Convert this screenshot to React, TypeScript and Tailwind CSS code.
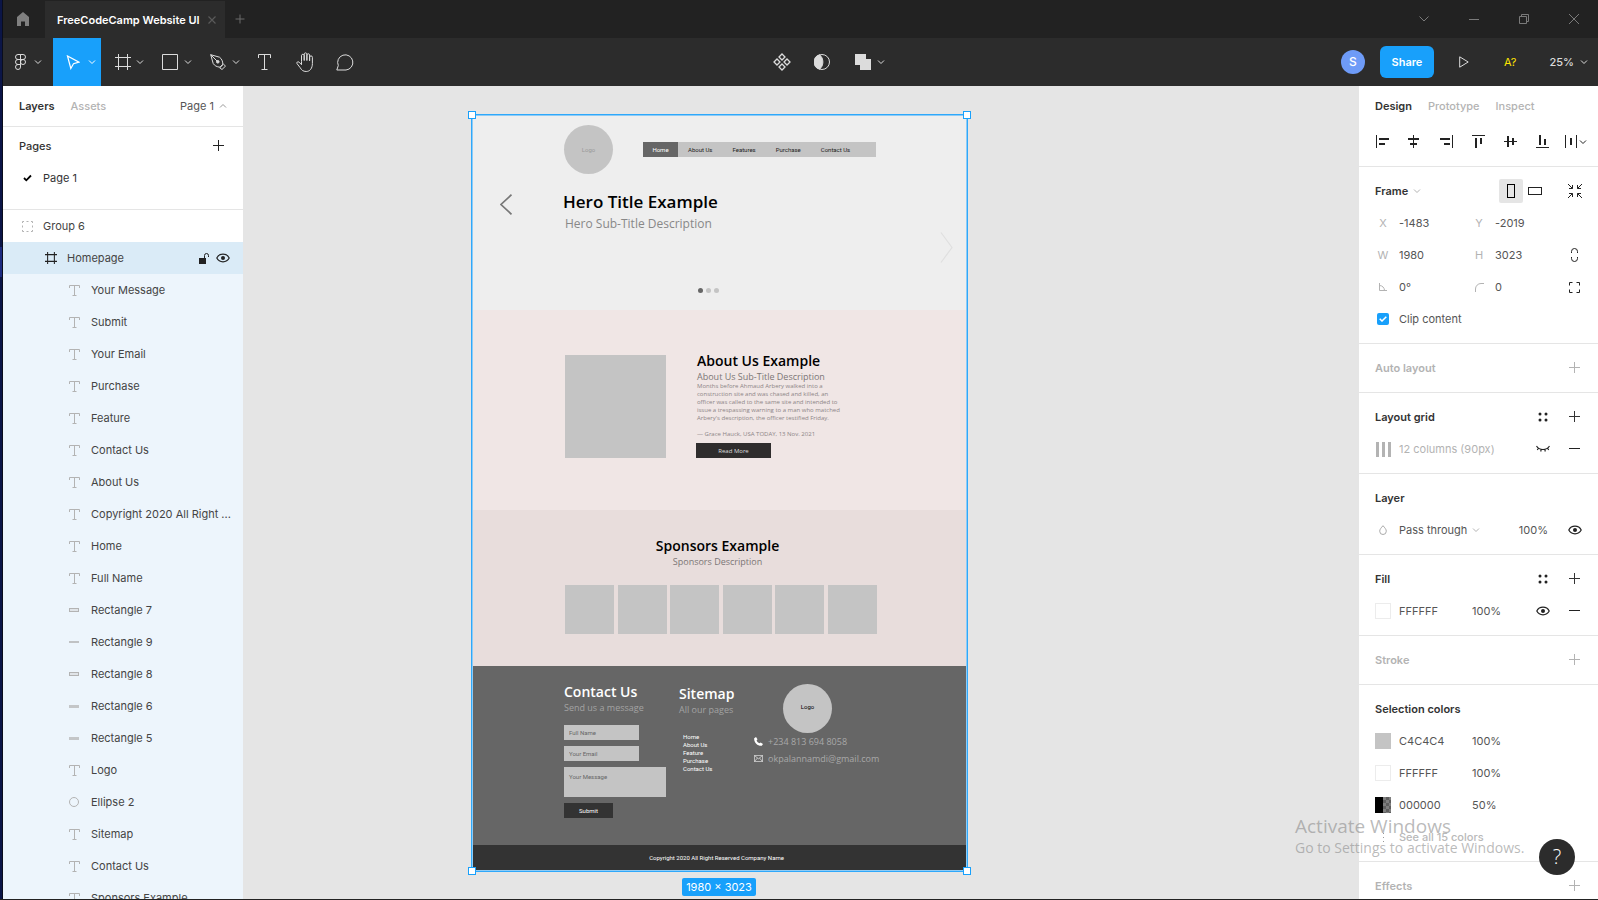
import type { ReactNode } from "react";

const Chevron = ({ className = "", up = false }: { className?: string; up?: boolean }) => (
  <svg width="8" height="8" viewBox="0 0 8 8" fill="none" stroke="currentColor" className={`shrink-0 ${className}`}>
    <path d={up ? "M1 5.5l3-3 3 3" : "M1 2.5l3 3 3-3"} />
  </svg>
);

const Plus = () => (
  <svg width="12" height="12" viewBox="0 0 12 12" stroke="currentColor">
    <path d="M5.5 0v11M0 5.5h11" />
  </svg>
);

const Minus = () => (
  <svg width="12" height="12" viewBox="0 0 12 12" stroke="currentColor">
    <path d="M0 5.5h11" />
  </svg>
);

const Eye = () => (
  <svg width="14" height="10" viewBox="0 0 14 10" fill="none" stroke="currentColor">
    <path d="M.8 5C2 2.600 4.200 1.200 7 1.200S12 2.600 13.200 5C12 7.400 9.800 8.800 7 8.800S2 7.400.8 5z" strokeWidth="1.200" />
    <circle cx="7" cy="5" r="2" fill="currentColor" stroke="none" />
  </svg>
);

const ClosedEye = () => (
  <svg width="14" height="8" viewBox="0 0 14 8" fill="none" stroke="currentColor">
    <path d="M.5 1C2 3.300 4.200 4.500 7 4.500S12 3.300 13.500 1M2.600 3L1.300 5M5.200 4.300l-.5 2.200M8.800 4.300l.5 2.200M11.400 3l1.300 2" strokeWidth="1.200" />
  </svg>
);

const FourDots = () => (
  <svg width="10" height="10" viewBox="0 0 10 10" fill="currentColor">
    <circle cx="2" cy="2" r="1.500" />
    <circle cx="8" cy="2" r="1.500" />
    <circle cx="2" cy="8" r="1.500" />
    <circle cx="8" cy="8" r="1.500" />
  </svg>
);

const FrameIcon = ({ size }: { size: number }) => (
  <svg width={size} height={size} viewBox="0 0 16 16" fill="none" stroke="currentColor" strokeWidth={size > 12 ? 1 : 1.4}>
    <path d="M3.500 0v16M12.500 0v16M0 3.500h16M0 12.500h16" />
  </svg>
);

const TextIcon = () => (
  <svg width="11" height="11" viewBox="0 0 11 11" fill="none" stroke="#b3b3b3">
    <path d="M.5 3V.5h10V3M5.500.5v10M3.500 10.500h4" />
  </svg>
);

type LayerKind = "text" | "box" | "line" | "bar" | "ellipse";

const LayerIcon = ({ kind }: { kind: LayerKind }) => {
  if (kind === "text") return <TextIcon />;
  if (kind === "ellipse") return <span className="size-[10px] rounded-full border border-[#b3b3b3]" />;
  if (kind === "box") return <span className="h-1 w-[10px] border border-[#b3b3b3] bg-[#e0e4e8]" />;
  if (kind === "line") return <span className="h-[2px] w-[10px] bg-[#c0c2c4]" />;
  return <span className="h-[3px] w-[10px] bg-[#c4c6c8]" />;
};

const layers: { name: string; kind: LayerKind }[] = [
  { name: "Your Message", kind: "text" },
  { name: "Submit", kind: "text" },
  { name: "Your Email", kind: "text" },
  { name: "Purchase", kind: "text" },
  { name: "Feature", kind: "text" },
  { name: "Contact Us", kind: "text" },
  { name: "About Us", kind: "text" },
  { name: "Copyright 2020 All Right ...", kind: "text" },
  { name: "Home", kind: "text" },
  { name: "Full Name", kind: "text" },
  { name: "Rectangle 7", kind: "box" },
  { name: "Rectangle 9", kind: "line" },
  { name: "Rectangle 8", kind: "box" },
  { name: "Rectangle 6", kind: "bar" },
  { name: "Rectangle 5", kind: "bar" },
  { name: "Logo", kind: "text" },
  { name: "Ellipse 2", kind: "ellipse" },
  { name: "Sitemap", kind: "text" },
  { name: "Contact Us", kind: "text" },
  { name: "Sponsors Example", kind: "text" },
];

const TitleBar = () => (
  <header className="flex h-[38px] shrink-0 items-center bg-[#222222] text-[#7a7a7a]">
    <button aria-label="Home" className="flex h-full w-[42px] items-center justify-center pr-[2px] text-[#808080]">
      <svg width="12" height="14" viewBox="0 0 12 14" fill="currentColor">
        <path d="M6 0l6 5v9H8V9.500H4V14H0V5z" />
      </svg>
    </button>
    <div className="mt-px flex h-[37px] w-[180px] items-center justify-between bg-[#2c2c2c] pr-2 pl-3">
      <span className="text-[11px] font-semibold whitespace-nowrap text-white">FreeCodeCamp Website UI</span>
      <button aria-label="Close tab" className="text-[#5a5a5a]">
        <svg width="10" height="10" viewBox="0 0 10 10" stroke="currentColor" strokeWidth="1.200">
          <path d="M1.500 1.500l7 7M8.500 1.500l-7 7" />
        </svg>
      </button>
    </div>
    <button aria-label="New tab" className="ml-[10px] text-[#6a6a6a]">
      <svg width="10" height="10" viewBox="0 0 10 10" stroke="currentColor">
        <path d="M5 .5v9M.5 5h9" />
      </svg>
    </button>
    <div className="ml-auto flex items-center">
      <button aria-label="Menu" className="flex w-[50px] justify-center">
        <svg width="10" height="6" viewBox="0 0 10 6" fill="none" stroke="currentColor">
          <path d="M.5.5L5 5 9.500.5" />
        </svg>
      </button>
      <button aria-label="Minimize" className="flex w-[50px] justify-center">
        <svg width="10" height="10" viewBox="0 0 10 10" stroke="currentColor">
          <path d="M0 5.500h10" />
        </svg>
      </button>
      <button aria-label="Restore" className="flex w-[50px] justify-center">
        <svg width="10" height="10" viewBox="0 0 10 10" fill="none" stroke="currentColor">
          <path d="M.5 2.500h7v7h-7zM2.500 2.500v-2h7v7h-2" />
        </svg>
      </button>
      <button aria-label="Close" className="flex w-[49px] justify-center">
        <svg width="10" height="10" viewBox="0 0 10 10" stroke="currentColor">
          <path d="M0 0l10 10M10 0L0 10" />
        </svg>
      </button>
    </div>
  </header>
);

const Tool = ({ label, children, className = "" }: { label: string; children: ReactNode; className?: string }) => (
  <button aria-label={label} className={`flex h-12 items-center justify-center ${className}`}>
    {children}
  </button>
);

const Toolbar = () => (
  <nav className="flex h-12 shrink-0 items-center justify-between bg-[#2c2c2c] text-[#dcdcdc]">
    <div className="flex">
      <Tool label="Main menu" className="w-[50px] gap-2">
        <svg width="11" height="16" viewBox="0 0 11 16" fill="none" stroke="currentColor">
          <path d="M5.500.5H3a2.500 2.500 0 000 5h2.500zM5.500.5H8a2.500 2.500 0 010 5H5.500zM5.500 5.500H3a2.500 2.500 0 000 5h2.500zM5.500 10.500H3A2.500 2.500 0 105.500 13z" />
          <circle cx="8" cy="8" r="2.500" />
        </svg>
        <Chevron />
      </Tool>
      <Tool label="Move" className="w-12 gap-2 bg-[#18a0fb] pl-2 text-white">
        <svg width="14" height="15" viewBox="0 0 14 15" fill="none" stroke="currentColor" strokeWidth="1.200">
          <path d="M1.500 1l3.300 12.500L7.500 8.700 13 7.200z" />
        </svg>
        <Chevron />
      </Tool>
      <Tool label="Frame" className="w-12 gap-[5px] pl-2">
        <FrameIcon size={16} />
        <Chevron />
      </Tool>
      <Tool label="Rectangle" className="w-12 gap-[6px] pl-2">
        <svg width="16" height="16" viewBox="0 0 16 16" fill="none" stroke="currentColor">
          <path d="M.5.5h15v15H.5z" />
        </svg>
        <Chevron />
      </Tool>
      <Tool label="Pen" className="w-12 gap-[6px] pl-2">
        <svg width="16" height="16" viewBox="0 0 16 16" fill="none" stroke="currentColor">
          <path d="M.7.7L9.500 3.200c2.200 1.600 3.300 4 3.300 7L10 13.200c-3.200-.3-5.500-1.500-6.800-3.700zM.7.7L7 7" />
          <path d="M9.800 13.800l3.700-3.600 2 1.900-3.500 3.400z" />
          <circle cx="7.800" cy="7.800" r="1.300" fill="currentColor" />
        </svg>
        <Chevron />
      </Tool>
      <Tool label="Text" className="w-10">
        <svg width="14" height="16" viewBox="0 0 14 16" fill="none" stroke="currentColor">
          <path d="M.5 4V.5h12V4M6.500.5v15M3.500 15.500h6" />
        </svg>
      </Tool>
      <Tool label="Hand" className="w-10">
        <svg width="18" height="20" viewBox="0 0 18 20" fill="none" stroke="currentColor">
          <path d="M5.500 9.500V3.300a1.400 1.400 0 012.700 0V8.500M8.200 8.500V1.900a1.400 1.400 0 012.700 0v6.600M10.900 8.500V2.800a1.400 1.400 0 012.700 0v6M13.600 8.800V5.300a1.400 1.400 0 012.800 0v6.200c0 4.800-2.500 8-6.200 8-3.200 0-4.700-1.500-6-3.800L1 11.600c-.7-1.200.8-2.500 2-1.500l2.500 2.600V9.500" />
        </svg>
      </Tool>
      <Tool label="Comment" className="w-10">
        <svg width="18" height="17" viewBox="0 0 18 17" fill="none" stroke="currentColor">
          <path d="M.8 16l1.500-4.500A7.600 7.600 0 1110 16z" />
        </svg>
      </Tool>
    </div>
    <div className="flex">
      <Tool label="Components" className="w-10">
        <svg width="18" height="18" viewBox="0 0 18 18" fill="none" stroke="currentColor" strokeWidth="1.300">
          <path d="M9 1l3 3-3 3-3-3zM9 11l3 3-3 3-3-3zM4 6l3 3-3 3-3-3zM14 6l3 3-3 3-3-3z" />
        </svg>
      </Tool>
      <Tool label="Mask" className="w-10">
        <svg width="16" height="16" viewBox="0 0 16 16" fill="none" stroke="currentColor">
          <circle cx="8" cy="8" r="7.500" />
          <path d="M5.500.8C10 4 10 12 5.500 15.200A7.500 7.500 0 015.500.8z" fill="currentColor" />
        </svg>
      </Tool>
      <Tool label="Union" className="w-12 gap-[6px] pl-2">
        <svg width="16" height="16" viewBox="0 0 16 16" fill="currentColor">
          <path d="M0 0h11v5h5v11H5v-5H0z" />
        </svg>
        <Chevron />
      </Tool>
    </div>
    <div className="flex w-[311px] items-center justify-end pr-[10px]">
      <span className="mr-[15px] flex size-6 items-center justify-center rounded-full bg-[#6e9bf7] text-xs font-medium text-white">S</span>
      <button className="h-8 w-[54px] rounded-md bg-[#18a0fb] text-[11px] font-semibold text-white">Share</button>
      <Tool label="Present" className="ml-6 w-3">
        <svg width="10" height="12" viewBox="0 0 10 12" fill="none" stroke="currentColor" className="shrink-0">
          <path d="M.7.8v10.400L9.200 6z" />
        </svg>
      </Tool>
      <button className="mr-[33px] ml-[34px] text-[11px] text-[#ffe600]">A?</button>
      <button className="flex items-center gap-[6px] text-[11px] font-medium">
        25% <Chevron />
      </button>
    </div>
  </nav>
);

const LayersPanel = () => (
  <aside className="flex w-60 shrink-0 flex-col overflow-hidden bg-white">
    <div className="flex h-[41px] shrink-0 items-center border-b border-[#e5e5e5] px-4">
      <button className="font-semibold text-[#333333]">Layers</button>
      <button className="ml-4 font-medium text-[#b3b3b3]">Assets</button>
      <button className="ml-auto flex items-center gap-[5px] text-[#555555]">
        Page 1 <Chevron up className="text-[#999999]" />
      </button>
    </div>
    <div className="flex h-[83px] shrink-0 flex-col border-b border-[#e5e5e5] pt-[3px]">
      <div className="flex h-8 items-center justify-between pr-[18px] pl-4">
        <h2 className="font-medium text-[#333333]">Pages</h2>
        <button aria-label="Add page" className="text-[#222222]">
          <Plus />
        </button>
      </div>
      <div className="flex h-8 items-center gap-[11px] pl-5 text-[#333333]">
        <svg width="9" height="8" viewBox="0 0 9 8" fill="none" stroke="#000" strokeWidth="1.800">
          <path d="M1 4l2.300 2.300L8 1.500" />
        </svg>
        Page 1
      </div>
    </div>
    <ul className="text-[#444444]">
      <li className="flex h-8 items-center gap-2 pl-4">
        <span className="flex w-4 justify-center">
          <svg width="11" height="11" viewBox="0 0 11 11" fill="none" stroke="#b3b3b3">
            <path d="M.5 2V.5H2M4.500.5h2M9 .5h1.500V2M10.500 4.500v2M10.500 9v1.500H9M6.500 10.500h-2M2 10.500H.5V9M.5 6.500v-2" />
          </svg>
        </span>
        Group 6
      </li>
      <li className="flex h-8 items-center gap-2 bg-[#daebf7] pr-[13px] pl-10">
        <span className="flex w-4 justify-center text-[#222222]">
          <FrameIcon size={12} />
        </span>
        Homepage
        <div className="ml-auto flex items-center gap-[6px] text-[#222222]">
          <button aria-label="Unlock">
            <svg width="11" height="11" viewBox="0 0 11 11" fill="currentColor">
              <path d="M0 5h7v6H0z" />
              <path d="M5.500 5V2.500a2 2 0 014 0V4" fill="none" stroke="currentColor" />
            </svg>
          </button>
          <button aria-label="Hide">
            <Eye />
          </button>
        </div>
      </li>
      {layers.map((layer, i) => (
        <li key={i} className="flex h-8 items-center gap-2 bg-[#edf5fc] pl-16 whitespace-nowrap">
          <span className="flex w-4 pl-[2px]">
            <LayerIcon kind={layer.kind} />
          </span>
          {layer.name}
        </li>
      ))}
    </ul>
  </aside>
);

const Handle = ({ className }: { className: string }) => (
  <span className={`absolute size-2 border border-[#18a0fb] bg-white ${className}`} />
);

const Homepage = () => (
  <div className="flex h-full flex-col font-['Open_Sans','Noto_Sans',sans-serif]">
    {/* Hero */}
    <section className="h-[195px] bg-[#eeeeee] pt-[10px]">
      <div className="flex items-center pl-[92px]">
        <div className="flex size-[49px] items-center justify-center rounded-full bg-[#c4c4c4] font-[Roboto,sans-serif] text-[6px] text-[#999999]">Logo</div>
        <nav className="ml-[30px] flex h-[15px] w-[233px] items-center gap-5 bg-[#c4c4c4] font-[Roboto,sans-serif] text-[6px] text-[#222222]">
          <a href="#" className="-mr-[10px] flex h-full w-[35px] items-center justify-center bg-[#666666] text-white">Home</a>
          <a href="#">About Us</a>
          <a href="#">Features</a>
          <a href="#">Purchase</a>
          <a href="#">Contact Us</a>
        </nav>
      </div>
      <div className="mt-4 flex items-start pr-[14px] pl-7">
        <svg width="13" height="21" viewBox="0 0 13 21" fill="none" stroke="#777777" strokeWidth="1.700" className="mt-1">
          <path d="M11.500.7L1 10.500l10.500 9.800" />
        </svg>
        <div className="ml-[50px]">
          <h1 className="text-[17px] leading-6 font-semibold text-black">Hero Title Example</h1>
          <p className="pl-[2px] text-xs leading-5 text-[#888888]">Hero Sub-Title Description</p>
        </div>
        <svg width="13" height="31" viewBox="0 0 13 31" fill="none" stroke="#dfdfdf" strokeWidth="1.200" className="mt-[42px] ml-auto">
          <path d="M1 .5l11 15-11 15" />
        </svg>
      </div>
      <div className="mt-[25px] flex gap-[3px] pl-[226px]">
        <span className="size-[5px] rounded-full bg-[#666666]" />
        <span className="size-[5px] rounded-full bg-[#c4c4c4]" />
        <span className="size-[5px] rounded-full bg-[#c4c4c4]" />
      </div>
    </section>

    {/* About */}
    <section className="flex h-[200px] bg-[#f0e6e5] pt-[41px] pl-[93px]">
      <div className="mt-1 h-[103px] w-[101px] bg-[#c4c4c4]" />
      <div className="ml-[30px]">
        <div className="pl-px whitespace-nowrap">
          <h2 className="text-[14px] leading-5 font-semibold text-black">About Us Example</h2>
          <p className="text-[9px] leading-[11px] text-[#7c7676]">About Us Sub-Title Description</p>
          <p className="text-[6px] leading-2 text-[#8c8585]">
            Months before Ahmaud Arbery walked into a
            <br />
            construction site and was chased and killed, an
            <br />
            officer was called to the same site and intended to
            <br />
            issue a trespassing warning to a man who matched
            <br />
            Arbery's description, the officer testified Friday.
            <br />
            <br />
            — Grace Hauck, USA TODAY, 13 Nov. 2021
          </p>
        </div>
        <button className="mt-[5px] flex h-[15px] w-[75px] items-center justify-center bg-[#2f2d2d] text-[6px] text-[#dddddd]">Read More</button>
      </div>
    </section>

    {/* Sponsors */}
    <section className="h-[156px] bg-[#e8dddc] pt-[26px]">
      <div className="pr-1 text-center">
        <h2 className="text-[14px] leading-5 font-semibold text-black">Sponsors Example</h2>
        <p className="text-[9px] leading-3 text-[#7c7676]">Sponsors Description</p>
      </div>
      <div className="mt-[17px] ml-[93px] flex w-[312px] justify-between">
        {[1, 2, 3, 4, 5, 6].map((n) => (
          <div key={n} className="size-[49px] bg-[#c4c4c4]" />
        ))}
      </div>
    </section>

    {/* Footer */}
    <footer className="flex h-[179px] bg-[#666666] pl-[92px]">
      <div className="w-[102px] pt-4">
        <h2 className="text-[14px] leading-5 font-semibold text-white">Contact Us</h2>
        <p className="text-[9px] leading-3 text-[#a3a3a3]">Send us a message</p>
        <form className="mt-[11px] flex flex-col items-start gap-[6px] font-[Roboto,sans-serif] text-[6px]">
          <input aria-label="Full Name" placeholder="Full Name" className="h-[15px] w-[75px] bg-[#c4c4c4] px-[5px] placeholder:text-[#666666]" />
          <input aria-label="Your Email" placeholder="Your Email" className="h-[15px] w-[75px] bg-[#c4c4c4] px-[5px] placeholder:text-[#666666]" />
          <textarea aria-label="Your Message" placeholder="Your Message" className="block h-[30px] w-[102px] resize-none bg-[#c4c4c4] px-[5px] py-[6px] leading-2 placeholder:text-[#666666]" />
          <button type="button" className="h-[15px] w-[49px] bg-[#333333] text-white">Submit</button>
        </form>
      </div>
      <div className="ml-[13px] w-[75px] pt-[18px]">
        <h2 className="text-[14px] leading-5 font-semibold text-white">Sitemap</h2>
        <p className="text-[9px] leading-3 text-[#a3a3a3]">All our pages</p>
        <div className="mt-[17px] flex flex-col pl-1 font-[Roboto,sans-serif] text-[6px] leading-2 text-white">
          <a href="#">Home</a>
          <a href="#">About Us</a>
          <a href="#">Feature</a>
          <a href="#">Purchase</a>
          <a href="#">Contact Us</a>
        </div>
      </div>
      <div className="pt-[18px] text-[9px] text-[#a8a8a8]">
        <div className="ml-[29px] flex size-[49px] items-center justify-center rounded-full bg-[#c4c4c4] pb-1 font-[Roboto,sans-serif] text-[6px] text-black">Logo</div>
        <p className="flex h-[17px] items-center gap-[5px]">
          <svg width="9" height="9" viewBox="0 0 9 9" fill="#ffffff">
            <path d="M.2 1.200L2 0l1.500 2.300-.9 1.100c.6 1.300 1.500 2.200 2.900 2.900l1.100-.8L9 7 7.800 8.800C3.500 9.200-.3 5.300.2 1.200z" />
          </svg>
          +234 813 694 8058
        </p>
        <p className="flex h-[17px] items-center gap-[5px]">
          <svg width="9" height="7" viewBox="0 0 9 7" fill="none" stroke="#dddddd" strokeWidth=".8">
            <path d="M.4.4h8.200v6.200H.4zM.4.4l4.100 3.400L8.600.4M.4 6.600l3-3.500M8.600 6.600l-3-3.500" />
          </svg>
          okpalannamdi@gmail.com
        </p>
      </div>
    </footer>
    <div className="flex h-[26px] items-center justify-center bg-[#333333] pr-[6px] font-[Roboto,sans-serif] text-[6px] text-white">
      Copyright 2020 All Right Reserved Company Name
    </div>
  </div>
);

const Canvas = () => (
  <main className="relative min-w-0 flex-1 overflow-hidden bg-[#e5e5e5]">
    <div className="absolute top-[29px] left-[229px] h-[756px] w-[495px]">
      <Homepage />
      {/* Selection outline */}
      <div className="absolute -inset-px border border-[#2ea8fb] inset-ring inset-ring-[#8ecbf5]" />
      <Handle className="-top-1 -left-1" />
      <Handle className="-top-1 -right-1" />
      <Handle className="-bottom-1 -left-1" />
      <Handle className="-right-1 -bottom-1" />
      <span className="absolute top-[763px] left-[210px] flex h-[18px] w-[74px] items-center justify-center rounded-[2px] bg-[#18a0fb] text-[11px] whitespace-nowrap text-white">
        1980 × 3023
      </span>
    </div>
  </main>
);

const alignIcons = [
  { label: "Align left", d: "M.5 0v13", bars: "M3 3h10v2H3zM3 8h6v2H3z" },
  { label: "Align horizontal centers", d: "M5.500 0v13", bars: "M0 3h11v2H0zM2 8h7v2H2z" },
  { label: "Align right", d: "M12.500 0v13", bars: "M0 3h10v2H0zM4 8h6v2H4z" },
  { label: "Align top", d: "M0 .5h13", bars: "M3 3h2v10H3zM8 3h2v6H8z" },
  { label: "Align vertical centers", d: "M0 6.500h13", bars: "M3 1h2v11H3zM8 3h2v7H8z" },
  { label: "Align bottom", d: "M0 12.500h13", bars: "M3 0h2v10H3zM8 4h2v6H8z" },
];

const Section = ({ children }: { children: ReactNode }) => (
  <section className="shrink-0 border-b border-[#e5e5e5] py-2 pr-[17px] pl-4">{children}</section>
);

const SectionTitle = ({ title, muted = false, dots = false, add = true }: { title: string; muted?: boolean; dots?: boolean; add?: boolean }) => (
  <div className={`flex h-8 items-center ${muted ? "text-[#b3b3b3]" : "text-[#333333]"}`}>
    <h2 className="font-semibold">{title}</h2>
    <div className="ml-auto flex items-center gap-[21px]">
      {dots && (
        <button aria-label={`${title} styles`} className="text-[#222222]">
          <FourDots />
        </button>
      )}
      {add && (
        <button aria-label={`Add ${title}`}>
          <Plus />
        </button>
      )}
    </div>
  </div>
);

const Field = ({ label, icon, value }: { label: string; icon?: ReactNode; value: string }) => (
  <label className="flex w-24 items-center gap-2">
    <span className="flex w-4 justify-center text-[#b3b3b3]">{icon ?? label}</span>
    <input aria-label={label} defaultValue={value} className="w-16 text-[#555555]" />
  </label>
);

const ColorRow = ({ color, opacity, swatch, children }: { color: string; opacity: string; swatch: string; children?: ReactNode }) => (
  <div className="flex h-8 items-center text-[#555555]">
    <span className={`mr-2 size-4 ${swatch}`} />
    <span className="w-[73px]">{color}</span>
    <span>{opacity}</span>
    {children}
  </div>
);

const DesignPanel = () => (
  <aside className="flex w-60 shrink-0 flex-col overflow-hidden border-l border-[#e5e5e5] bg-white">
    <div className="flex h-10 shrink-0 items-center gap-4 pl-4 font-medium text-[#b3b3b3]">
      <button className="font-semibold text-[#333333]">Design</button>
      <button>Prototype</button>
      <button>Inspect</button>
    </div>
    <div className="flex h-[41px] shrink-0 items-start border-b border-[#e5e5e5] pt-[9px] pl-2 text-[#222222]">
      {alignIcons.map((icon) => (
        <button key={icon.label} aria-label={icon.label} className="w-8 pl-[9px]">
          <svg width="13" height="13" viewBox="0 0 13 13" className="block">
            <path d={icon.d} stroke="currentColor" />
            <path d={icon.bars} fill="currentColor" />
          </svg>
        </button>
      ))}
      <button aria-label="Distribute" className="ml-[6px] flex items-center gap-[2px]">
        <svg width="12" height="13" viewBox="0 0 12 13">
          <path d="M.5 0v13M11.500 0v13" stroke="currentColor" />
          <path d="M5 3h2v7H5z" fill="currentColor" />
        </svg>
        <Chevron />
      </button>
    </div>

    <Section>
      <div className="flex h-8 items-center">
        <button className="flex items-center gap-[5px] font-semibold text-[#333333]">
          Frame <Chevron className="text-[#b3b3b3]" />
        </button>
        <button aria-label="Portrait" className="ml-auto flex size-6 items-center justify-center rounded-[2px] bg-[#e5e5e5]">
          <span className="h-[14px] w-2 border border-black" />
        </button>
        <button aria-label="Landscape" className="ml-[5px]">
          <span className="block h-2 w-[14px] border border-[#222222]" />
        </button>
        <button aria-label="Resize to fit" className="-mr-px ml-[26px] text-[#222222]">
          <svg width="14" height="14" viewBox="0 0 14 14" fill="none" stroke="currentColor">
            <path d="M0 0l4.500 4.500M1 4.500h3.500V1M14 0L9.500 4.500M13 4.500H9.500V1M0 14l4.500-4.500M1 9.500h3.500V13M14 14L9.500 9.500M13 9.500H9.500V13" />
          </svg>
        </button>
      </div>
      <div className="flex h-8 items-center">
        <Field label="X" value="-1483" />
        <Field label="Y" value="-2019" />
      </div>
      <div className="flex h-8 items-center">
        <Field label="W" value="1980" />
        <Field label="H" value="3023" />
        <button aria-label="Constrain proportions" className="mr-[2px] ml-auto">
          <svg width="8" height="14" viewBox="0 0 8 14" fill="none" stroke="#222222">
            <path d="M.5 5V3.500a3 3 0 016 0V5M.5 9v1.500a3 3 0 006 0V9" />
          </svg>
        </button>
      </div>
      <div className="flex h-8 items-center">
        <Field
          label="Rotation"
          value="0°"
          icon={
            <svg width="8" height="8" viewBox="0 0 8 8" fill="none" stroke="currentColor">
              <path d="M.5 0v7.500H8M.5 2.500a5 5 0 015 5" />
            </svg>
          }
        />
        <Field
          label="Corner radius"
          value="0"
          icon={
            <svg width="9" height="9" viewBox="0 0 9 9" fill="none" stroke="currentColor">
              <path d="M.5 9V6A5.500 5.500 0 016 .5h3" />
            </svg>
          }
        />
        <button aria-label="Independent corners" className="mr-px ml-auto">
          <svg width="11" height="11" viewBox="0 0 11 11" fill="none" stroke="#222222">
            <path d="M.5 3.500v-3h3M7.500.5h3v3M10.500 7.500v3h-3M3.500 10.500h-3v-3" />
          </svg>
        </button>
      </div>
      <label className="flex h-8 items-center pl-[2px] text-[#555555]">
        <span className="relative mr-[10px] flex size-3 items-center">
          <input type="checkbox" defaultChecked className="size-3 appearance-none rounded-[2px] checked:bg-[#18a0fb]" />
          <svg width="8" height="6" viewBox="0 0 8 6" fill="none" stroke="#ffffff" strokeWidth="1.500" className="pointer-events-none absolute left-[2px]">
            <path d="M.7 2.700L3 5 7.300.7" />
          </svg>
        </span>
        Clip content
      </label>
    </Section>

    <Section>
      <SectionTitle title="Auto layout" muted />
    </Section>

    <Section>
      <SectionTitle title="Layout grid" dots />
      <div className="flex h-8 items-center text-[#b3b3b3]">
        <svg width="16" height="15" viewBox="0 0 16 15" fill="currentColor" className="mr-2">
          <path d="M1 0h3v15H1zM7 0h3v15H7zM13 0h3v15h-3z" />
        </svg>
        12 columns (90px)
        <div className="ml-auto flex items-center gap-[19px] text-[#222222]">
          <button aria-label="Show grid">
            <ClosedEye />
          </button>
          <button aria-label="Remove grid">
            <Minus />
          </button>
        </div>
      </div>
    </Section>

    <Section>
      <SectionTitle title="Layer" add={false} />
      <div className="flex h-8 items-center text-[#555555]">
        <span className="mr-2 flex w-4 justify-center">
          <svg width="8" height="10" viewBox="0 0 8 10" fill="none" stroke="#aaaaaa">
            <path d="M4 .7C5.800 2.800 7.300 4.300 7.300 6.200a3.300 3.300 0 01-6.600 0C.7 4.300 2.200 2.800 4 .7z" />
          </svg>
        </span>
        <button className="flex items-center gap-[5px]">
          Pass through <Chevron className="text-[#b3b3b3]" />
        </button>
        <span className="ml-auto">100%</span>
        <button aria-label="Layer visibility" className="-mr-px ml-5 text-[#222222]">
          <Eye />
        </button>
      </div>
    </Section>

    <Section>
      <SectionTitle title="Fill" dots />
      <ColorRow color="FFFFFF" opacity="100%" swatch="border border-[#ececec] bg-white">
        <div className="ml-auto flex items-center gap-[19px] text-[#222222]">
          <button aria-label="Hide fill">
            <Eye />
          </button>
          <button aria-label="Remove fill">
            <Minus />
          </button>
        </div>
      </ColorRow>
    </Section>

    <Section>
      <SectionTitle title="Stroke" muted />
    </Section>

    <Section>
      <SectionTitle title="Selection colors" add={false} />
      <ColorRow color="C4C4C4" opacity="100%" swatch="bg-[#c4c4c4]" />
      <ColorRow color="FFFFFF" opacity="100%" swatch="border border-[#ececec] bg-white" />
      <ColorRow
        color="000000"
        opacity="50%"
        swatch="border-l-8 border-black bg-[repeating-conic-gradient(#5f5f5f_0_25%,#7f7f7f_0_50%)] bg-[length:6px_6px]"
      />
      <button className="flex h-8 items-center font-medium text-[#b9b9b9]">
        <span className="mr-2 flex w-4 flex-col items-center gap-[3px]">
          <span className="size-px bg-[#999999]" />
          <span className="size-px bg-[#999999]" />
          <span className="size-px bg-[#999999]" />
        </span>
        See all 15 colors
      </button>
    </Section>

    <Section>
      <SectionTitle title="Effects" muted />
    </Section>
  </aside>
);

export default function App() {
  return (
    <div className="relative flex h-screen overflow-hidden border-b border-[#222222] font-[Inter,sans-serif] text-[11px] leading-4">
      <div className="w-[3px] shrink-0 border-r border-[#0a0d1c] bg-[#0b1547]">
        <div className="mt-[247px] h-[30px] bg-[#1c2a80]" />
      </div>
      <div className="flex min-w-0 flex-1 flex-col">
        <TitleBar />
        <Toolbar />
        <div className="flex min-h-0 flex-1">
          <LayersPanel />
          <Canvas />
          <DesignPanel />
        </div>
      </div>

      {/* Activation watermark */}
      <div className="pointer-events-none absolute right-[67px] bottom-[41px] w-[236px] font-['Open_Sans',sans-serif] whitespace-nowrap text-[#8c8c8c]/60">
        <p className="text-[19px] leading-6">Activate Windows</p>
        <p className="text-[14px] leading-5">Go to Settings to activate Windows.</p>
      </div>
      <button aria-label="Help" className="absolute right-[23px] bottom-6 size-9 rounded-full bg-[#2c2c2c] font-['Open_Sans',sans-serif] text-xl font-light text-white">
        ?
      </button>
    </div>
  );
}
